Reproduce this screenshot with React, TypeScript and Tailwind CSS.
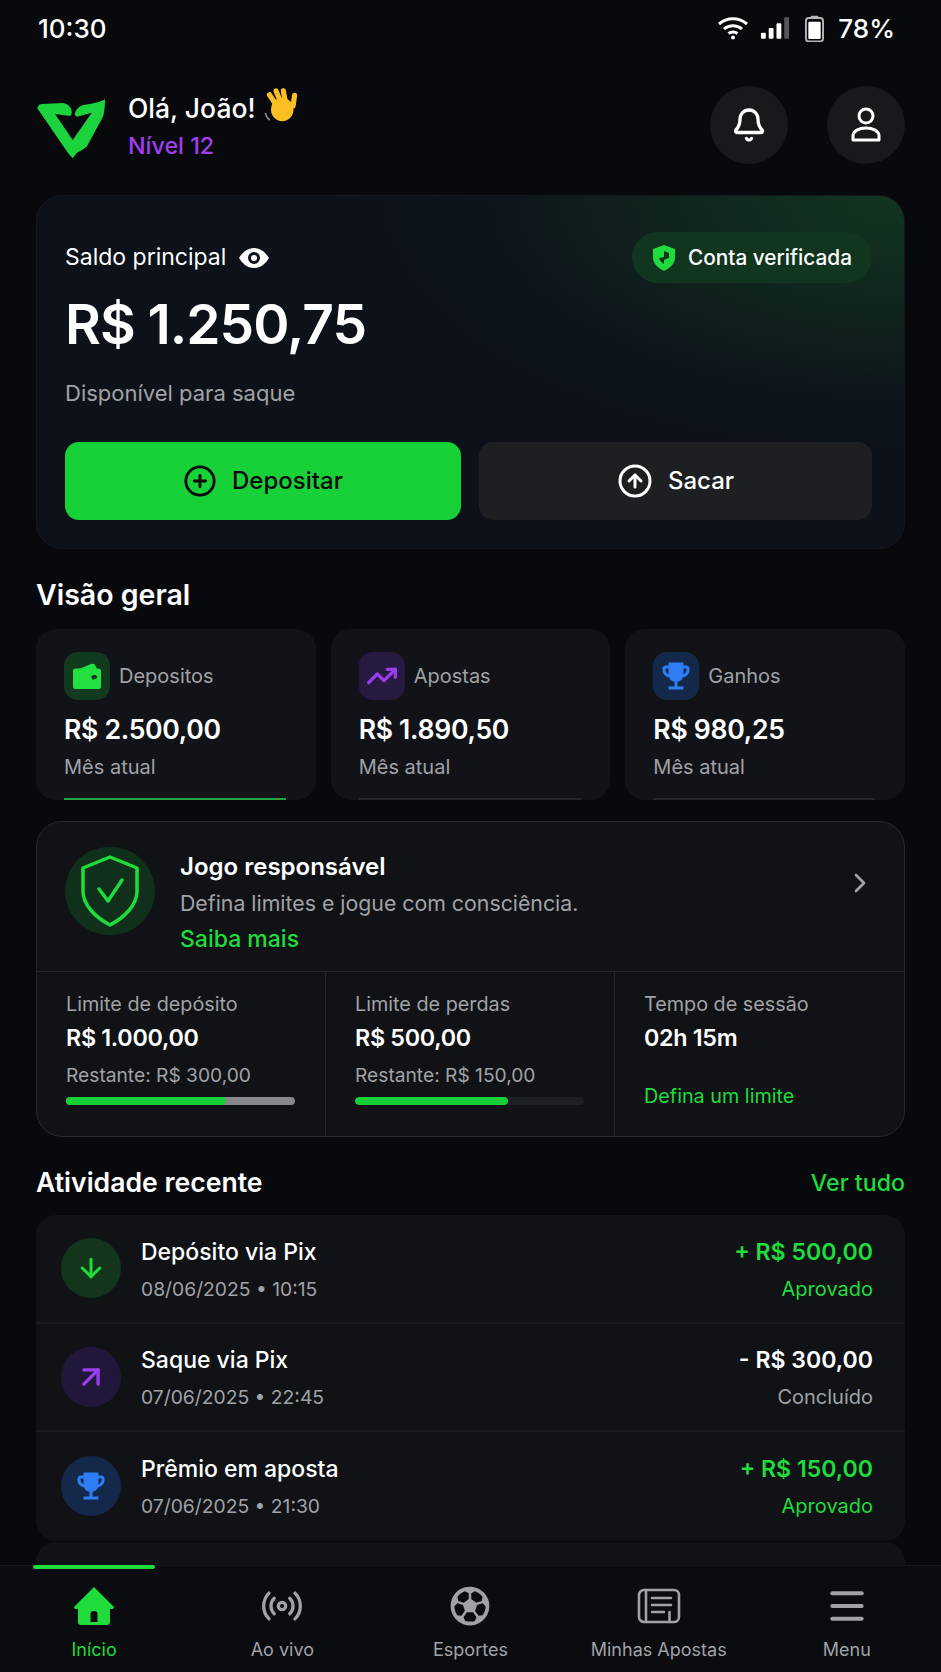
import { Bell, CirclePlus, CircleArrowUp, TrendingUp, ChevronRight, ArrowDown, ArrowUpRight, Radio, Menu } from 'lucide-react';
import { MdEmojiEvents } from 'react-icons/md';
import { FaRegFutbol } from 'react-icons/fa';

const stats = [
  { label: 'Depositos', value: 'R$ 2.500,00', tile: 'bg-[#123a1e]', accent: 'bg-[#23a33f]', kind: 'wallet' },
  { label: 'Apostas', value: 'R$ 1.890,50', tile: 'bg-[#261a40]', accent: 'bg-[#24262b]', kind: 'trend' },
  { label: 'Ganhos', value: 'R$ 980,25', tile: 'bg-[#14284a]', accent: 'bg-[#24262b]', kind: 'trophy' },
];

const activity = [
  { title: 'Depósito via Pix', date: '08/06/2025 • 10:15', amount: '+ R$ 500,00', status: 'Aprovado', circle: 'bg-[#12351c]', kind: 'down', amountClass: 'text-[#1fdc3c]', statusClass: 'text-[#1fdc3c]', nudge: 'pt-[2px]' },
  { title: 'Saque via Pix', date: '07/06/2025 • 22:45', amount: '- R$ 300,00', status: 'Concluído', circle: 'bg-[#21173a]', kind: 'up', amountClass: 'text-white', statusClass: 'text-[#a1a2a6]', nudge: 'pt-[2px]' },
  { title: 'Prêmio em aposta', date: '07/06/2025 • 21:30', amount: '+ R$ 150,00', status: 'Aprovado', circle: 'bg-[#14284a]', kind: 'trophy', amountClass: 'text-[#1fdc3c]', statusClass: 'text-[#1fdc3c]', nudge: '' },
];

function Logo() {
  return (
    <svg viewBox="7 9 69 60" className="w-[69px] h-[60px] shrink-0 ml-[1px] mt-[8px]" fill="#1bd33c">
      <path d="M7.3 18.3 C8 15 10 14 12 14 L33 13 C38 14 41 17 41.7 20.7 C42 23 41.5 25 40 26 L25 24 L42.7 50 L61.7 22.7 L47 26.7 C45 26 44.5 24 45 22.7 C47 18 50 16 53 15 C62 14 70 12 75 9.3 C75 16 74.5 22 73 26.7 L56.7 56.7 C53 60 49 61 46.7 63 L42.7 68.3 L38 63 Z" />
    </svg>
  );
}

function WaveHand() {
  return (
    <svg viewBox="0 0 32 32" className="w-[36px] h-[36px] ml-[6px] -mt-[6px] shrink-0">
      <g fill="#fbbf24">
        <rect x="7" y="4" width="4.6" height="15" rx="2.3" transform="rotate(-34 9 11)" />
        <rect x="12" y="1" width="4.6" height="15" rx="2.3" transform="rotate(-22 14 8)" />
        <rect x="17.5" y="1" width="4.6" height="15" rx="2.3" transform="rotate(-10 20 8)" />
        <rect x="26" y="5" width="4.6" height="14" rx="2.3" transform="rotate(8 28 12)" />
        <ellipse cx="18" cy="20" rx="10" ry="10.5" />
      </g>
      <path d="M3 23 C3.5 26 5 28 7 29.5" stroke="#8b8d92" strokeWidth="1.4" fill="none" />
    </svg>
  );
}

function HomeIcon() {
  return (
    <svg viewBox="0 0 42 42" className="w-[42px] h-[42px]">
      <path fill="#1fdc3c" fillRule="evenodd" d="M21 2 L33 14 L41 22 Q41 24 38 24 L37 24 L37 37 Q37 40 34 40 L8 40 Q5 40 5 37 L5 24 L4 24 Q1 24 1 22 L9 14 Z M17.5 37 L24.5 37 L24.5 29 Q24.5 26 21 26 Q17.5 26 17.5 29 Z" />
    </svg>
  );
}

function UserIcon() {
  return (
    <svg viewBox="0 0 30 36" className="w-[30px] h-[36px]" fill="none" stroke="#fff" strokeWidth="3">
      <circle cx="15" cy="9" r="7" />
      <path d="M2 33 V29 C2 24 8 21 15 21 C22 21 28 24 28 29 V33 Z" strokeLinejoin="round" />
    </svg>
  );
}

function WalletIcon() {
  return (
    <svg viewBox="0 0 28 26" className="w-[28px] h-[26px]" fill="#22e040">
      <path d="M6 6 L18 1 Q21 0 22 2 L24 6 Z" />
      <rect x="0" y="5.5" width="28" height="20.5" rx="2.5" />
      <path d="M18.5 13 C19.5 11.5 23 11.5 24 13 C24.5 15 23 16.5 21.5 16 L20 17 C19 16 18 14.5 18.5 13 Z" fill="#123a1e" />
    </svg>
  );
}

function NewsIcon() {
  return (
    <svg viewBox="0 0 44 36" className="w-[44px] h-[36px]" fill="none" stroke="currentColor" strokeWidth="2.6" strokeLinecap="round">
      <rect x="2" y="2" width="40" height="32" rx="5" />
      <path d="M9 2 V34" />
      <path d="M15 10 H34 M15 17 H34 M15 24 H27 M32.5 24 V34" />
    </svg>
  );
}

function StatIcon({ kind }: { kind: string }) {
  if (kind === 'wallet') return <WalletIcon />;
  if (kind === 'trend') return <TrendingUp className="w-[32px] h-[32px] text-[#9a3df0]" strokeWidth={2.5} />;
  return <MdEmojiEvents className="w-[36px] h-[36px] text-[#2f7df6]" />;
}

function ActivityIcon({ kind }: { kind: string }) {
  if (kind === 'down') return <ArrowDown className="w-[30px] h-[30px] text-[#1fdc3c]" strokeWidth={2.4} />;
  if (kind === 'up') return <ArrowUpRight className="w-[34px] h-[34px] text-[#9a3df0]" strokeWidth={2.4} />;
  return <MdEmojiEvents className="w-[36px] h-[36px] text-[#2f7df6]" />;
}

function Limit({ label, value, rest, fill, track }: { label: string; value: string; rest: string; fill: string; track: string }) {
  return (
    <div className="pl-[29px] pr-[30px] pt-[19px] border-r border-[#22252a]">
      <div className="text-[19.8px] leading-[26px] text-[#a1a2a6] whitespace-nowrap">{label}</div>
      <div className="mt-[6px] text-[23.3px] leading-[30px] font-semibold text-white tracking-[-0.3px]">{value}</div>
      <div className="mt-[9px] text-[19.2px] leading-[26px] text-[#a1a2a6] whitespace-nowrap">{rest}</div>
      <div className={`mt-[9px] h-[8px] rounded-full ${track} overflow-hidden`}>
        <div className={`h-full rounded-full bg-[#17cf37] ${fill}`} />
      </div>
    </div>
  );
}

export default function App() {
  const nav = [
    { label: 'Início', active: true },
    { label: 'Ao vivo', icon: <Radio className="w-[44px] h-[44px]" strokeWidth={1.8} /> },
    { label: 'Esportes', icon: <FaRegFutbol className="w-[40px] h-[40px]" /> },
    { label: 'Minhas Apostas', icon: <NewsIcon /> },
    { label: 'Menu', icon: <Menu className="w-[44px] h-[44px]" strokeWidth={2.2} /> },
  ];

  return (
    <div className="w-[941px] h-[1672px] bg-[#07090d] text-white flex flex-col overflow-hidden font-['Inter',sans-serif]">
      <div className="flex-1 overflow-hidden px-[36px]">
        {/* Status bar */}
        <div className="flex items-center justify-between h-[56px] pl-[2px] pr-[10px]">
          <span className="text-[26px] font-medium">10:30</span>
          <div className="flex items-center gap-[11px]">
            <svg viewBox="0 0 32 24" className="w-[32px] h-[24px]" fill="none" stroke="#fff" strokeWidth="3">
              <path d="M2 8 C10 1 22 1 30 8" />
              <path d="M7 13 C12 8.5 20 8.5 25 13" />
              <path d="M11.5 17.5 C14 15.5 18 15.5 20.5 17.5" />
              <circle cx="16" cy="21.5" r="2" fill="#fff" stroke="none" />
            </svg>
            <svg viewBox="0 0 32 24" className="w-[31px] h-[24px]">
              <rect x="1" y="17" width="5" height="6" rx="1" fill="#fff" />
              <rect x="9" y="12" width="5" height="11" rx="1" fill="#fff" />
              <rect x="17" y="7" width="5" height="16" rx="1" fill="#fff" />
              <rect x="25" y="1" width="5" height="22" rx="1" fill="#55575b" />
            </svg>
            <svg viewBox="0 0 20 28" className="w-[19px] h-[27px] ml-[3px]">
              <rect x="6" y="0.5" width="8" height="3" rx="1" fill="#b5b6b8" />
              <rect x="1" y="3" width="18" height="24.5" rx="3" fill="none" stroke="#b5b6b8" strokeWidth="2" />
              <rect x="3.5" y="7" width="13" height="18" rx="1" fill="#fff" />
            </svg>
            <span className="text-[26px] font-medium ml-[3px]">78%</span>
          </div>
        </div>

        {/* Header */}
        <div className="flex items-center justify-between h-[76px] mt-[31px]">
          <div className="flex items-center">
            <Logo />
            <div className="ml-[22px]">
              <div className="flex items-center text-[26.5px] leading-[36px] font-medium">Olá, João!<WaveHand /></div>
              <div className="mt-[5px] text-[23.3px] leading-[30px] font-medium text-[#a33df0]">Nível 12</div>
            </div>
          </div>
          <div className="flex gap-[39px]">
            <button className="w-[78px] h-[78px] rounded-full bg-[#17191d] flex items-center justify-center">
              <Bell className="w-[36px] h-[36px] text-white" strokeWidth={2.2} />
            </button>
            <button className="w-[78px] h-[78px] rounded-full bg-[#17191d] flex items-center justify-center">
              <UserIcon />
            </button>
          </div>
        </div>

        {/* Balance */}
        <section className="mt-[32px] h-[354px] rounded-[26px] border border-[#15181e] pl-[28px] pr-[32px] pt-[36px] bg-[radial-gradient(ellipse_70%_85%_at_100%_0%,#12361f_0%,#10261f_35%,#0e141b_70%,#0d1119_100%)]">
          <div className="flex items-center justify-between h-[51px]">
            <div className="flex items-center gap-[13px]">
              <span className="text-[23px]">Saldo principal</span>
              <svg viewBox="0 0 30 20" className="w-[30px] h-[20px]">
                <path fillRule="evenodd" fill="#fff" d="M15 0 C22 0 27 5 30 10 C27 15 22 20 15 20 C8 20 3 15 0 10 C3 5 8 0 15 0 Z M15 4 A6 6 0 1 0 15 16 A6 6 0 1 0 15 4 Z" />
                <circle cx="15" cy="10" r="3" fill="#fff" />
              </svg>
            </div>
            <div className="flex items-center gap-[12px] h-[51px] px-[20px] rounded-full bg-[#12351f]">
              <svg viewBox="0 0 24 26" className="w-[24px] h-[26px]">
                <path fill="#1fdc3c" d="M12 0 L23 4 V12 C23 19 18 23 12 26 C6 23 1 19 1 12 V4 Z" />
                <path fill="#12351f" d="M12 6 L17 8 V13 C15 14 13 14 12 15 V19 C10 18 8 16 7 13 L12 12 Z" />
              </svg>
              <span className="text-[20.8px] font-medium">Conta verificada</span>
            </div>
          </div>
          <div className="mt-[6px] text-[55px] leading-[70px] font-semibold tracking-[-1px]">R$ 1.250,75</div>
          <div className="mt-[19px] text-[22px] leading-[30px] text-[#a1a2a6]">Disponível para saque</div>
          <div className="flex gap-[18px] mt-[34px]">
            <button className="w-[396px] h-[78px] rounded-[14px] bg-[#18d138] text-[#07090d] flex items-center justify-center gap-[15px]">
              <CirclePlus className="w-[34px] h-[34px]" strokeWidth={2} />
              <span className="text-[24px] font-medium">Depositar</span>
            </button>
            <button className="flex-1 h-[78px] rounded-[14px] bg-[#1e1f23] text-white flex items-center justify-center gap-[15px]">
              <CircleArrowUp className="w-[36px] h-[36px]" strokeWidth={2} />
              <span className="text-[24px] font-medium">Sacar</span>
            </button>
          </div>
        </section>

        {/* Overview */}
        <h2 className="mt-[28px] text-[28.5px] leading-[36px] font-semibold">Visão geral</h2>
        <div className="grid grid-cols-3 gap-[15px] mt-[16px]">
          {stats.map((s) => (
            <div key={s.label} className="relative h-[171px] rounded-[20px] bg-[#111318] pl-[28px] pt-[23px]">
              <div className="flex items-center gap-[9px]">
                <div className={`w-[46px] h-[48px] rounded-[14px] flex items-center justify-center ${s.tile}`}>
                  <StatIcon kind={s.kind} />
                </div>
                <span className="text-[20px] text-[#a1a2a6]">{s.label}</span>
              </div>
              <div className="mt-[11px] text-[26.6px] leading-[36px] font-semibold tracking-[-0.3px]">{s.value}</div>
              <div className="mt-[6px] text-[20px] leading-[28px] text-[#a1a2a6]">Mês atual</div>
              <div className={`absolute left-[28px] bottom-0 w-[222px] h-[2px] ${s.accent}`} />
            </div>
          ))}
        </div>

        {/* Responsible gaming */}
        <section className="mt-[21px] h-[316px] rounded-[26px] border border-[#26292e] bg-[#101216] flex flex-col">
          <div className="relative h-[150px] pl-[28px] pt-[25px] flex border-b border-[#22252a]">
            <div className="w-[90px] h-[88px] rounded-full bg-[#10301b] flex items-center justify-center shrink-0">
              <svg viewBox="0 0 60 72" className="w-[60px] h-[72px]" fill="none" stroke="#1fdc3c" strokeWidth="3.5" strokeLinejoin="round" strokeLinecap="round">
                <path d="M30 2 L57 13 V36 C57 50 45 62 30 70 C15 62 3 50 3 36 V13 Z" />
                <path d="M19 34 L28 46 L42 25" />
              </svg>
            </div>
            <div className="ml-[25px] mt-[2px]">
              <div className="text-[24px] leading-[36px] font-semibold">Jogo responsável</div>
              <div className="text-[21.3px] leading-[36px] text-[#a1a2a6]">Defina limites e jogue com consciência.</div>
              <div className="text-[23px] leading-[36px] font-medium text-[#1fdc3c]">Saiba mais</div>
            </div>
            <ChevronRight className="absolute right-[28px] top-[45px] w-[32px] h-[32px] text-[#a1a2a6]" strokeWidth={2} />
          </div>
          <div className="flex-1 grid grid-cols-3">
            <Limit label="Limite de depósito" value="R$ 1.000,00" rest="Restante: R$ 300,00" fill="w-[70%]" track="bg-[#87888c]" />
            <Limit label="Limite de perdas" value="R$ 500,00" rest="Restante: R$ 150,00" fill="w-[67%]" track="bg-[#1d1f23]" />
            <div className="pl-[29px] pt-[19px]">
              <div className="text-[19.8px] leading-[26px] text-[#a1a2a6]">Tempo de sessão</div>
              <div className="mt-[6px] text-[23.3px] leading-[30px] font-semibold tracking-[-0.3px]">02h 15m</div>
              <div className="mt-[29px] text-[19.8px] leading-[28px] text-[#1fdc3c]">Defina um limite</div>
            </div>
          </div>
        </section>

        {/* Recent activity */}
        <div className="flex items-center justify-between mt-[28px] h-[36px]">
          <h2 className="text-[26.6px] font-semibold">Atividade recente</h2>
          <a className="text-[23.2px] font-medium text-[#1fdc3c]">Ver tudo</a>
        </div>
        <div className="mt-[14px] rounded-[20px] bg-[#101216] divide-y-2 divide-[#191b20]">
          {activity.map((a) => (
            <div key={a.title} className="h-[108.5px] pl-[25px] pr-[32px] flex items-center">
              <div className={`w-[60px] h-[60px] rounded-full flex items-center justify-center ${a.circle}`}>
                <ActivityIcon kind={a.kind} />
              </div>
              <div className={`ml-[20px] flex-1 ${a.nudge}`}>
                <div className="text-[23px] leading-[32px] font-medium">{a.title}</div>
                <div className="mt-[7px] text-[19.3px] leading-[28px] text-[#a1a2a6]">{a.date}</div>
              </div>
              <div className={`text-right ${a.nudge}`}>
                <div className={`text-[23.1px] leading-[32px] font-semibold ${a.amountClass}`}>{a.amount}</div>
                <div className={`mt-[7px] text-[20px] leading-[28px] ${a.statusClass}`}>{a.status}</div>
              </div>
            </div>
          ))}
        </div>
        <div className="mt-[1px] h-[60px] rounded-t-[20px] bg-[#101216]" />
      </div>

      {/* Bottom nav */}
      <nav className="relative h-[107px] shrink-0 grid grid-cols-5 bg-[#0a0c10] border-t border-[#16181c]">
        <div className="absolute left-[33px] -top-[1px] w-[122px] h-[4px] rounded-full bg-[#1fdc3c]" />
        {nav.map((n) => (
          <div key={n.label} className={`flex flex-col items-center pt-[18px] ${n.active ? 'text-[#1fdc3c]' : 'text-[#a1a2a6]'}`}>
            <div className="h-[44px] flex items-center justify-center">{n.active ? <HomeIcon /> : n.icon}</div>
            <span className="mt-[9px] text-[18px] leading-[26px]">{n.label}</span>
          </div>
        ))}
      </nav>
    </div>
  );
}
